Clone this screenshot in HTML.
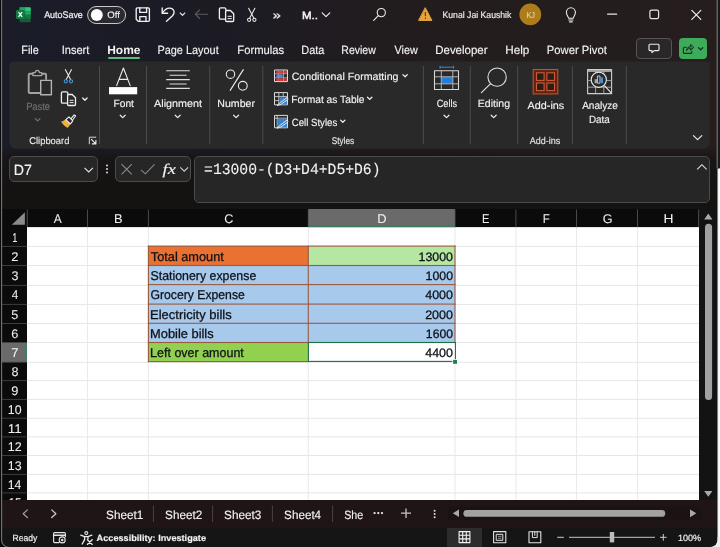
<!DOCTYPE html>
<html lang="en">
<head>
<meta charset="utf-8">
<title>Excel - Left over amount</title>
<style>
html,body{margin:0;padding:0;background:#000;}
body{width:720px;height:547px;overflow:hidden;position:relative;font-family:"Liberation Sans",sans-serif;color:#f3f3f3;}
#win{position:absolute;left:0;top:0;width:720px;height:547px;overflow:hidden;background:#1c1718;}
.abs{position:absolute;}
svg{position:absolute;overflow:visible;}
.t{position:absolute;white-space:pre;line-height:1;text-rendering:geometricPrecision;transform-origin:0 0;color:#f3f3f3;}
#chrome{position:absolute;left:0;top:0;width:720px;height:209px;background:linear-gradient(90deg,#1a1c29 0%,#1c1b24 30%,#221c1e 55%,#261e1d 100%);}
#chrome2{position:absolute;left:0;top:146px;width:720px;height:63px;background:linear-gradient(180deg,rgba(22,19,19,0) 0%,#181516 22%,#151212 60%,#151212 100%);}
#titlebar,#tabs,#ribboncontent,#formulabar,#sheetbar,#status,#grid{position:absolute;left:0;top:0;width:720px;height:547px;will-change:transform;}
.fbox{position:absolute;background:#262626;border:1px solid #4b4b4b;border-radius:5px;box-sizing:border-box;}
</style>
</head>
<body>
<div id="win">
<div id="chrome"></div>
<div id="chrome2"></div>

<!-- ===== TITLE BAR ===== -->
<div id="titlebar">
<svg style="left:0;top:0" width="720" height="32" viewBox="0 0 720 32" fill="none" stroke-linecap="round" stroke-linejoin="round">
<!-- excel logo -->
<g stroke="none">
<path d="M20.5 7.2 H29.6 Q30.8 7.2 30.8 8.4 V21.1 Q30.8 22.3 29.6 22.3 H20.7 Q19.5 22.3 19.5 21.1 V8.2 Q19.5 7.2 20.5 7.2 Z" fill="#185c37"/>
<rect x="19.5" y="7.2" width="5.7" height="3.9" fill="#21a366"/>
<path d="M25.2 7.2 H29.6 Q30.8 7.2 30.8 8.4 V11.1 H25.2 Z" fill="#33c481"/>
<rect x="19.5" y="11.1" width="5.7" height="3.7" fill="#107c41"/>
<rect x="25.2" y="11.1" width="5.6" height="3.7" fill="#21a366"/>
<rect x="25.2" y="14.8" width="5.6" height="3.7" fill="#107c41"/>
<rect x="16" y="10" width="8.6" height="8.9" rx="1" fill="#107c41"/>
</g>
<path d="M18.5 12.1 L22.1 16.9 M22.1 12.1 L18.5 16.9" stroke="#fff" stroke-width="1.25" stroke-linecap="butt"/>
<!-- autosave toggle -->
<rect x="87.6" y="6.5" width="38" height="17" rx="8.5" stroke="#c6c6c6" stroke-width="1" fill="#2a2a30"/>
<circle cx="96.8" cy="15" r="6" fill="#fdfdfd" stroke="none"/>
<!-- save -->
<g stroke="#f2f2f2" stroke-width="1.35">
<path d="M136.2 9 Q136.2 7.9 137.3 7.9 H148.2 Q149.4 7.9 149.4 9 V20.3 Q149.4 21.4 148.2 21.4 H138.4 L136.2 19.3 Z"/>
<path d="M139.8 7.9 V12.4 H146.6 V7.9"/>
<path d="M139.8 21.4 V16.6 H146 V21.4"/>
</g>
<!-- undo -->
<g stroke="#f2f2f2" stroke-width="1.35">
<path d="M162.2 7.8 V13.2 H167.6"/>
<path d="M162.4 13 C164.5 9.8 167.4 8 170 8.2 C173 8.5 174.5 10.8 174 13 C173.7 14.4 173 15.2 172 16.2 L166.5 21.2"/>
</g>
<path d="M180.2 13 L182.5 15.4 L184.8 13" stroke="#e4e4e4" stroke-width="1.1"/>
<!-- back (disabled) -->
<path d="M207.5 14.2 H195.5 M199.6 10 L195.3 14.2 L199.6 18.5" stroke="#5d5b60" stroke-width="1.1"/>
<!-- copy -->
<g stroke="#f2f2f2" stroke-width="1.3">
<path d="M224.8 19.2 H220.6 Q219.4 19.2 219.4 18 V9 Q219.4 7.8 220.6 7.8 H224.6 Q225.8 7.8 225.8 9 V10"/>
<path d="M225.6 11.6 Q225.6 10.5 226.7 10.5 H230.4 L233.7 13.8 V20.4 Q233.7 21.5 232.6 21.5 H226.7 Q225.6 21.5 225.6 20.4 Z"/>
<path d="M228 16.3 H231.4 M228 18.6 H231.4" stroke-width="1"/>
</g>
<!-- scissors -->
<g stroke="#ececec" stroke-width="1.05">
<path d="M248.6 8.2 L253.9 18.2 M254.9 8.2 L249.6 18.2"/>
<circle cx="249.1" cy="19.8" r="1.6"/>
<circle cx="254.4" cy="19.8" r="1.6"/>
</g>
<!-- dropdown chevron after M.. -->
<path d="M322.2 12.9 L326 16.6 L329.8 12.9" stroke="#ececec" stroke-width="1.2"/>
<!-- search -->
<circle cx="381.3" cy="12.6" r="4.1" stroke="#e8e8e8" stroke-width="1.1"/>
<path d="M378.3 15.7 L373.7 20.4" stroke="#e8e8e8" stroke-width="1.2"/>
<!-- warning -->
<path d="M425.4 8 L431.9 20.4 H418.9 Z" fill="#e7a53c" stroke="#e7a53c" stroke-width="1"/>
<path d="M425.4 12 V16.3" stroke="#5a3c10" stroke-width="1.2" stroke-linecap="butt"/>
<circle cx="425.4" cy="18.3" r="0.7" fill="#5a3c10" stroke="none"/>
<!-- avatar -->
<circle cx="530.3" cy="14.4" r="10.9" fill="#ad7d1d" stroke="none"/>
<!-- light bulb -->
<g stroke="#ececec" stroke-width="1.1">
<path d="M568.6 18.2 C568.3 16.4 566.4 15.3 566.4 12.6 C566.4 9.8 568.4 7.8 570.9 7.8 C573.4 7.8 575.4 9.8 575.4 12.6 C575.4 15.3 573.5 16.4 573.2 18.2 Z"/>
<path d="M568.8 20 H573 M569.6 21.9 H572.2"/>
</g>
<!-- window controls -->
<path d="M607.6 14.2 H616.6" stroke="#e6e6e6" stroke-width="1.2"/>
<rect x="649.9" y="10.1" width="8.7" height="8.6" rx="1.6" stroke="#e6e6e6" stroke-width="1.2"/>
<path d="M691.8 10.3 L700.8 19.3 M700.8 10.3 L691.8 19.3" stroke="#f0f0f0" stroke-width="1.2"/>
</svg>
<div class="t" style="left:0;top:11px;font-size:9.5px;color:#f4f4f4;transform:translateX(44.13px) scaleX(0.9392);-webkit-text-stroke:0.2px;">AutoSave</div>
<div class="t" style="left:0;top:11px;font-size:9.36px;color:#f0f0f0;transform:translateX(107.24px) scaleX(1.0214);-webkit-text-stroke:0.14px;">Off</div>
<div class="t" style="left:0;top:12px;font-size:10.47px;color:#f4f4f4;transform:translateX(301.94px) scaleX(1.1090);-webkit-text-stroke:0.45px;">M..</div>
<div class="t" style="left:0;top:10px;font-size:11.73px;color:#f0f0f0;transform:translateX(272.81px) scaleX(1.2390);-webkit-text-stroke:0.3px;">»</div>
<div class="t" style="left:0;top:11px;font-size:9.36px;color:#f0f0f0;transform:translateX(442.49px) scaleX(0.9274);-webkit-text-stroke:0.14px;">Kunal Jai Kaushik</div>
<div class="t" style="left:0;top:11px;font-size:8.38px;color:#f3e3bd;transform:translateX(526.40px) scaleX(0.8769);">KJ</div>
</div>

<!-- ===== TABS ===== -->
<div id="tabs">
<div class="abs" style="left:108px;top:57px;width:32px;height:2px;background:#61b981;border-radius:1px;"></div>
<div class="abs" style="left:636px;top:38px;width:36px;height:21px;border:1px solid #565555;border-radius:4px;box-sizing:border-box;background:#292727;"></div>
<div class="abs" style="left:679px;top:38px;width:28px;height:21px;border-radius:4px;background:#3eab5b;"></div>
<svg style="left:0;top:32px" width="720" height="30" viewBox="0 32 720 30" fill="none" stroke-linecap="round" stroke-linejoin="round">
<path d="M650 44.2 H658 Q659 44.2 659 45.2 V49.6 Q659 50.6 658 50.6 H654.3 L652 52.6 V50.6 H650 Q649 50.6 649 49.6 V45.2 Q649 44.2 650 44.2 Z" stroke="#ececec" stroke-width="1.15"/>
<path d="M686.4 47.2 H684.4 Q683.4 47.2 683.4 48.2 V52.4 Q683.4 53.4 684.4 53.4 H690.8 Q691.8 53.4 691.8 52.4 V51.4" stroke="#16331f" stroke-width="1.15"/>
<path d="M686.6 50.4 C686.8 47.8 688.4 46.6 690.6 46.6 V44.4 L693.8 47.4 L690.6 50.2 V48.4 C689 48.4 687.6 48.8 686.6 50.4 Z" stroke="#16331f" stroke-width="1" fill="#2f8a49"/>
<path d="M698.4 47.6 L700.6 49.8 L702.8 47.6" stroke="#16331f" stroke-width="1.3"/>
</svg>
<div class="t" style="left:0;top:45px;font-size:11.87px;transform:translateX(21.28px) scaleX(0.9164);-webkit-text-stroke:0.14px;">File</div>
<div class="t" style="left:0;top:45px;font-size:11.87px;transform:translateX(61.67px) scaleX(0.9338);-webkit-text-stroke:0.14px;">Insert</div>
<div class="t" style="left:0;top:45px;font-size:11.87px;font-weight:bold;transform:translateX(107.20px) scaleX(1.0078);">Home</div>
<div class="t" style="left:0;top:45px;font-size:11.87px;transform:translateX(157.48px) scaleX(0.9191);-webkit-text-stroke:0.14px;">Page Layout</div>
<div class="t" style="left:0;top:45px;font-size:11.87px;transform:translateX(237.25px) scaleX(0.9502);-webkit-text-stroke:0.14px;">Formulas</div>
<div class="t" style="left:0;top:45px;font-size:11.87px;transform:translateX(301.28px) scaleX(0.9208);-webkit-text-stroke:0.14px;">Data</div>
<div class="t" style="left:0;top:45px;font-size:11.87px;transform:translateX(341.31px) scaleX(0.8872);-webkit-text-stroke:0.14px;">Review</div>
<div class="t" style="left:0;top:45px;font-size:11.87px;transform:translateX(394.58px) scaleX(0.9109);-webkit-text-stroke:0.14px;">View</div>
<div class="t" style="left:0;top:45px;font-size:11.87px;transform:translateX(435.23px) scaleX(0.9664);-webkit-text-stroke:0.14px;">Developer</div>
<div class="t" style="left:0;top:45px;font-size:11.87px;transform:translateX(505.21px) scaleX(0.9868);-webkit-text-stroke:0.14px;">Help</div>
<div class="t" style="left:0;top:45px;font-size:11.87px;transform:translateX(546.75px) scaleX(0.9501);-webkit-text-stroke:0.14px;">Power Pivot</div>
</div>

<!-- ===== RIBBON ===== -->
<div id="ribboncontent">
<svg style="left:0;top:60px" width="720" height="90" viewBox="0 60 720 90" fill="none" stroke-linecap="round" stroke-linejoin="round">
<path d="M14.2 61.5 H706.6 Q709.7 61.5 709.7 64.6 V140.8 Q709.7 148.7 701.8 148.7 H17.1 Q9.2 148.7 9.2 140.8 V66.5 Q9.2 61.5 14.2 61.5 Z" fill="#292929" stroke="none"/>
<!-- group separators -->
<path d="M99.5 66 V144 M146.5 66 V144 M209.7 66 V144 M262.8 66 V144 M423.4 66 V144 M470.3 66 V144 M517.7 66 V144 M572.4 66 V144 M626.3 66 V144" stroke="#4c4c4c" stroke-width="1" stroke-linecap="butt"/>
<!-- paste (disabled) -->
<g stroke="#a3a3a3">
<path d="M39.4 93 H29.8 Q28.7 93 28.7 91.9 V74.9 Q28.7 73.8 29.8 73.8 H32.6 M42 73.8 H45 Q46.1 73.8 46.1 74.9 V79" stroke-width="1.9"/>
<path d="M32.9 75.6 V72.6 H35.3 C35.3 69.7 39.3 69.7 39.3 72.6 H41.7 V75.6 Z" stroke-width="1.3"/>
<rect x="40.7" y="80.4" width="10.7" height="14.4" stroke-width="1.4" stroke="#b4b4b4"/>
</g>
<path d="M35.2 118.6 L37.6 120.9 L40 118.6" stroke="#777" stroke-width="1.1"/>
<!-- cut -->
<g stroke-width="1.05">
<path d="M65.3 69.6 L70.6 79.6 M71.5 69.6 L66.2 79.6" stroke="#ececec"/>
<circle cx="65.8" cy="81.3" r="1.6" stroke="#3f9be0"/>
<circle cx="71" cy="81.3" r="1.6" stroke="#3f9be0"/>
</g>
<!-- copy -->
<g stroke="#eeeeee" stroke-width="1.3">
<path d="M66.8 103.2 H62.6 Q61.4 103.2 61.4 102 V93 Q61.4 91.8 62.6 91.8 H66.6 Q67.8 91.8 67.8 93 V94"/>
<path d="M67.6 95.6 Q67.6 94.5 68.7 94.5 H72.2 L75.5 97.8 V104.4 Q75.5 105.5 74.4 105.5 H68.7 Q67.6 105.5 67.6 104.4 Z"/>
<path d="M70 100.3 H73.2 M70 102.6 H73.2" stroke-width="1"/>
</g>
<path d="M82.7 98 L84.9 100.2 L87.1 98" stroke="#f0f0f0" stroke-width="1.3"/>
<!-- format painter -->
<path d="M62 122 L66.6 119.2 L70.6 123.6 L67.6 127.4 C65.4 126.6 63.4 124.8 62 122 Z" fill="#f0b040" stroke="#f0b040" stroke-width="0.8"/>
<path d="M65.8 119.6 L69 116.8 L72.8 120.8 L70.4 123.8 Z" stroke="#f4f4f4" stroke-width="1.05" fill="#292929"/>
<path d="M71 118.6 L74.2 114.8 L75.6 116 L72.6 120" stroke="#f4f4f4" stroke-width="1.05"/>
<!-- dialog launcher -->
<path d="M95.8 137.2 H89.3 V143.8" stroke="#d8d8d8" stroke-width="1"/>
<path d="M91.4 139.3 L95.6 143.6 M95.9 140.4 V143.9 H92.4" stroke="#f0f0f0" stroke-width="1.1"/>
<!-- font -->
<path d="M116.6 85.6 L123.4 68 L130.2 85.6 M119.3 79.4 H127.5" stroke="#ececec" stroke-width="1.1"/>
<rect x="109" y="87.1" width="28.2" height="7.2" fill="#fdfdfd"/>
<path d="M120.2 115.2 L122.7 117.6 L125.2 115.2" stroke="#ececec" stroke-width="1.2"/>
<!-- alignment -->
<path d="M166.2 70.8 H189.8 M169.6 75.2 H186.6 M166.2 79.6 H189.8 M169.6 84 H186.6 M166.2 88.4 H189.8" stroke="#dedede" stroke-width="1.1" stroke-linecap="butt"/>
<path d="M175.2 115.2 L177.7 117.6 L180.2 115.2" stroke="#ececec" stroke-width="1.2"/>
<!-- number -->
<g stroke="#ececec" stroke-width="1.1">
<circle cx="230.5" cy="74.2" r="4.2"/>
<circle cx="242.8" cy="85.8" r="4.4"/>
<path d="M243.3 69.6 L230.2 90.4"/>
</g>
<path d="M233.6 115.2 L236.1 117.6 L238.6 115.2" stroke="#ececec" stroke-width="1.2"/>
<!-- conditional formatting icon -->
<g stroke-linecap="butt">
<rect x="274.5" y="70" width="13" height="11.6" stroke="#e2e2e2" stroke-width="1"/>
<path d="M278.6 70 V81.6 M283.6 70 V81.6 M274.5 73.7 H287.5 M274.5 77.8 H287.5" stroke="#bdbdbd" stroke-width="0.8"/>
<rect x="276.2" y="70.8" width="6.6" height="2.5" fill="#e23838"/>
<rect x="284.2" y="70.8" width="2.6" height="2.5" fill="#e23838"/>
<rect x="276.2" y="78.4" width="6.6" height="2.6" fill="#e23838"/>
<rect x="284.2" y="78.4" width="2.6" height="2.6" fill="#e23838"/>
<rect x="276.4" y="74.4" width="6.2" height="3" fill="#4f8fd6"/>
</g>
<!-- format as table icon -->
<g stroke-linecap="butt">
<rect x="274.5" y="92.6" width="13" height="12.2" stroke="#dcdcdc" stroke-width="1"/>
<path d="M278.8 92.6 V104.8 M283.2 92.6 V97 M274.5 96.6 H287.5 M274.5 100.6 H279" stroke="#c8c8c8" stroke-width="0.9"/>
<path d="M279.4 97.2 H287 V104.4 H279.4 Z" fill="#2f86d6"/>
<path d="M287.2 97.4 L280.2 102.6 L277 105.6 L281.2 104.2 L288 99.4 Z" fill="#5d7f9e" stroke="#f0f0f0" stroke-width="0.9" stroke-linejoin="round"/>
</g>
<!-- cell styles icon -->
<g stroke-linecap="butt">
<rect x="274.5" y="115.4" width="13" height="12.4" stroke="#dcdcdc" stroke-width="1"/>
<path d="M274.5 118.2 H287.5 M277.2 115.4 V127.8" stroke="#c8c8c8" stroke-width="0.9"/>
<path d="M277.8 118.8 H287 V127.2 H277.8 Z" fill="#2f86d6"/>
<path d="M287.2 120 L280.2 125.2 L277 128.2 L281.2 126.8 L288 122 Z" fill="#5d7f9e" stroke="#f0f0f0" stroke-width="0.9" stroke-linejoin="round"/>
</g>
<path d="M402.9 74.6 L405.1 76.8 L407.3 74.6 M367.5 97.2 L369.7 99.4 L371.9 97.2 M340.6 120.1 L342.8 122.3 L345 120.1" stroke="#f0f0f0" stroke-width="1.3"/>
<!-- cells -->
<g stroke-linecap="butt">
<path d="M440 67.2 H453.6 M440 65.8 V68.6 M453.6 65.8 V68.6" stroke="#3f97e0" stroke-width="0.9"/>
<rect x="441.6" y="77" width="11" height="6.6" fill="#1f7fdb"/>
<rect x="434.5" y="70.7" width="24" height="18.8" stroke="#d6d6d6" stroke-width="1.1"/>
<path d="M441.3 70.7 V89.5 M452.8 70.7 V89.5 M434.5 76.8 H458.5 M434.5 83.8 H458.5" stroke="#b4b4b4" stroke-width="1"/>
</g>
<path d="M444 115.2 L446.5 117.6 L449 115.2" stroke="#ececec" stroke-width="1.2"/>
<!-- editing -->
<circle cx="497.1" cy="77.1" r="9.2" stroke="#e4e4e4" stroke-width="1.05"/>
<path d="M490.4 83.9 L481.4 92.6" stroke="#e4e4e4" stroke-width="1.15"/>
<path d="M491.2 115.2 L493.7 117.6 L496.2 115.2" stroke="#ececec" stroke-width="1.2"/>
<!-- add-ins -->
<g stroke-linecap="butt" stroke-linejoin="miter">
<rect x="533.2" y="69.5" width="24.6" height="24.4" fill="#5e2312" stroke="#c4522c" stroke-width="1.1"/>
<rect x="536.5" y="72.8" width="7.6" height="7.6" fill="#2c1d19" stroke="#cc5d36" stroke-width="1.1"/>
<rect x="546.9" y="72.8" width="7.6" height="7.6" fill="#2c1d19" stroke="#cc5d36" stroke-width="1.1"/>
<rect x="536.5" y="83" width="7.6" height="7.6" fill="#2c1d19" stroke="#cc5d36" stroke-width="1.1"/>
<rect x="546.9" y="83" width="7.6" height="7.6" fill="#2c1d19" stroke="#cc5d36" stroke-width="1.1"/>
</g>
<!-- analyze data -->
<g stroke-linecap="butt">
<rect x="587.6" y="69.6" width="24" height="24" stroke="#cfcfcf" stroke-width="1.1"/>
<path d="M587.6 71 H611.6" stroke="#bdbdbd" stroke-width="1.6"/>
<path d="M587.6 80.6 H611.6 M587.6 87.2 H611.6 M595.6 71 V93.6 M603.8 71 V93.6" stroke="#ababab" stroke-width="0.9"/>
<circle cx="598.8" cy="79.8" r="7.6" fill="#292929" stroke="#ececec" stroke-width="1.1"/>
<rect x="594.6" y="79.2" width="2.4" height="4" fill="#9aa6b4"/>
<rect x="597.4" y="76" width="2.6" height="7.2" fill="#2a2f36" stroke="#e8e8e8" stroke-width="0.8"/>
<rect x="600.6" y="77.4" width="2.4" height="5.8" fill="#3a93dd"/>
<path d="M604.4 85.6 L611.4 93.2" stroke="#ececec" stroke-width="1.1"/>
</g>
<!-- collapse ribbon -->
<path d="M693.4 135.6 L697.6 139.6 L701.8 135.6" stroke="#ececec" stroke-width="1.2"/>
</svg>
<div class="t" style="left:0;top:103px;font-size:10.47px;color:#747474;transform:translateX(26.13px) scaleX(0.8902);-webkit-text-stroke:0.1px;">Paste</div>
<div class="t" style="left:0;top:137px;font-size:9.78px;color:#e8e8e8;transform:translateX(29.22px) scaleX(0.9614);-webkit-text-stroke:0.14px;">Clipboard</div>
<div class="t" style="left:0;top:100px;font-size:10.47px;transform:translateX(113.46px) scaleX(0.9786);-webkit-text-stroke:0.14px;">Font</div>
<div class="t" style="left:0;top:100px;font-size:10.47px;transform:translateX(154.12px) scaleX(1.0307);-webkit-text-stroke:0.14px;">Alignment</div>
<div class="t" style="left:0;top:100px;font-size:10.47px;transform:translateX(217.33px) scaleX(1.0110);-webkit-text-stroke:0.14px;">Number</div>
<div class="t" style="left:0;top:73px;font-size:10.47px;transform:translateX(291.65px) scaleX(1.0145);-webkit-text-stroke:0.14px;">Conditional Formatting</div>
<div class="t" style="left:0;top:96px;font-size:10.47px;transform:translateX(291.36px) scaleX(0.9778);-webkit-text-stroke:0.14px;">Format as Table</div>
<div class="t" style="left:0;top:119px;font-size:10.47px;transform:translateX(291.70px) scaleX(0.9204);-webkit-text-stroke:0.14px;">Cell Styles</div>
<div class="t" style="left:0;top:137px;font-size:9.78px;color:#e8e8e8;transform:translateX(331.73px) scaleX(0.8424);-webkit-text-stroke:0.14px;">Styles</div>
<div class="t" style="left:0;top:100px;font-size:10.47px;transform:translateX(436.72px) scaleX(0.8766);-webkit-text-stroke:0.14px;">Cells</div>
<div class="t" style="left:0;top:100px;font-size:10.47px;transform:translateX(477.83px) scaleX(1.0044);-webkit-text-stroke:0.14px;">Editing</div>
<div class="t" style="left:0;top:102px;font-size:10.47px;transform:translateX(527.62px) scaleX(1.0309);-webkit-text-stroke:0.14px;">Add-ins</div>
<div class="t" style="left:0;top:137px;font-size:9.78px;color:#e8e8e8;transform:translateX(529.63px) scaleX(0.9212);-webkit-text-stroke:0.14px;">Add-ins</div>
<div class="t" style="left:0;top:102px;font-size:10.47px;transform:translateX(582.13px) scaleX(0.9571);-webkit-text-stroke:0.14px;">Analyze</div>
<div class="t" style="left:0;top:116px;font-size:10.47px;transform:translateX(588.89px) scaleX(0.9451);-webkit-text-stroke:0.14px;">Data</div>
</div>

<!-- ===== FORMULA BAR ===== -->
<div id="formulabar">
<div class="fbox" style="left:9px;top:156px;width:89px;height:26px;"></div>
<svg style="left:83px;top:166px" width="12" height="8" viewBox="0 0 12 8"><path d="M1.5 1.8 L5.7 5.9 L9.9 1.8" stroke="#e6e6e6" stroke-width="1.1" fill="none"/></svg>
<svg style="left:104px;top:163px" width="6" height="12" viewBox="0 0 6 12"><circle cx="3" cy="2.4" r="1" fill="#dcdcdc"/><circle cx="3" cy="6" r="1" fill="#dcdcdc"/><circle cx="3" cy="9.6" r="1" fill="#dcdcdc"/></svg>
<div class="fbox" style="left:115px;top:156px;width:76px;height:26px;"></div>
<svg style="left:120px;top:163px" width="70" height="13" viewBox="0 0 70 13"><path d="M1.5 1.2 L11.8 11.3 M11.8 1.2 L1.5 11.3" stroke="#8a8a8a" stroke-width="1.1" fill="none"/><path d="M21 6.8 L25.3 10.8 L34.5 1.4" stroke="#8a8a8a" stroke-width="1.1" fill="none"/><path d="M60.3 4.3 L64.2 8.2 L68.1 4.3" stroke="#cfcfcf" stroke-width="1.1" fill="none"/></svg>
<div class="fbox" style="left:194px;top:156px;width:516px;height:47px;"></div>
<svg style="left:696px;top:163px" width="12" height="8" viewBox="0 0 12 8"><path d="M1.2 6.3 L5.9 1.7 L10.6 6.3" stroke="#e0e0e0" stroke-width="1.1" fill="none"/></svg>
<div class="t" style="left:0;top:164px;font-size:14.8px;transform:translateX(13.80px) scaleX(0.9576);-webkit-text-stroke:0.14px;">D7</div>
<div class="t" style="left:0;top:163px;font-size:15.45px;font-family:'Liberation Mono',monospace;transform:translateX(204.06px) scaleX(0.9522);-webkit-text-stroke:0.1px;">=13000-(D3+D4+D5+D6)</div>
<div class="t" style="left:0;top:163px;font-size:14.85px;font-style:italic;font-family:'Liberation Serif',serif;transform:translateX(162.55px) scaleX(1.2340);-webkit-text-stroke:0.15px;">fx</div>
</div>

<!-- ===== GRID ===== -->
<div id="grid">
<svg style="left:0;top:0" width="720" height="547" viewBox="0 0 720 547" shape-rendering="auto">
<rect x="2.00" y="209.00" width="697.00" height="291.00" fill="#ffffff"/>
<rect x="86.95" y="227.10" width="1.10" height="272.90" fill="#ebebeb"/>
<rect x="147.85" y="227.10" width="1.10" height="272.90" fill="#ebebeb"/>
<rect x="307.75" y="227.10" width="1.10" height="272.90" fill="#ebebeb"/>
<rect x="454.45" y="227.10" width="1.10" height="272.90" fill="#ebebeb"/>
<rect x="515.35" y="227.10" width="1.10" height="272.90" fill="#ebebeb"/>
<rect x="575.95" y="227.10" width="1.10" height="272.90" fill="#ebebeb"/>
<rect x="636.95" y="227.10" width="1.10" height="272.90" fill="#ebebeb"/>
<rect x="27.00" y="245.90" width="672.00" height="1.00" fill="#e6e6e6"/>
<rect x="27.00" y="265.00" width="672.00" height="1.00" fill="#e6e6e6"/>
<rect x="27.00" y="284.90" width="672.00" height="1.00" fill="#e6e6e6"/>
<rect x="27.00" y="303.90" width="672.00" height="1.00" fill="#e6e6e6"/>
<rect x="27.00" y="323.00" width="672.00" height="1.00" fill="#e6e6e6"/>
<rect x="27.00" y="342.00" width="672.00" height="1.00" fill="#e6e6e6"/>
<rect x="27.00" y="361.80" width="672.00" height="1.00" fill="#e6e6e6"/>
<rect x="27.00" y="380.10" width="672.00" height="1.00" fill="#e6e6e6"/>
<rect x="27.00" y="398.90" width="672.00" height="1.00" fill="#e6e6e6"/>
<rect x="27.00" y="417.70" width="672.00" height="1.00" fill="#e6e6e6"/>
<rect x="27.00" y="436.40" width="672.00" height="1.00" fill="#e6e6e6"/>
<rect x="27.00" y="455.00" width="672.00" height="1.00" fill="#e6e6e6"/>
<rect x="27.00" y="473.90" width="672.00" height="1.00" fill="#e6e6e6"/>
<rect x="27.00" y="492.40" width="672.00" height="1.00" fill="#e6e6e6"/>
<rect x="2.00" y="209.00" width="697.00" height="18.10" fill="#0b0b0b"/>
<rect x="2.00" y="226.60" width="25.00" height="273.40" fill="#0b0b0b"/>
<rect x="699.00" y="209.00" width="18.50" height="291.00" fill="#141313"/>
<path d="M24.9 212.2 V224.8 H11.8 Z" fill="#8b8b8b"/>
<rect x="26.80" y="209.50" width="1.00" height="17.60" fill="#4a4a4a"/>
<rect x="87.00" y="209.50" width="1.00" height="17.60" fill="#4a4a4a"/>
<rect x="147.90" y="209.50" width="1.00" height="17.60" fill="#4a4a4a"/>
<rect x="307.80" y="209.50" width="1.00" height="17.60" fill="#4a4a4a"/>
<rect x="454.50" y="209.50" width="1.00" height="17.60" fill="#4a4a4a"/>
<rect x="515.40" y="209.50" width="1.00" height="17.60" fill="#4a4a4a"/>
<rect x="576.00" y="209.50" width="1.00" height="17.60" fill="#4a4a4a"/>
<rect x="637.00" y="209.50" width="1.00" height="17.60" fill="#4a4a4a"/>
<rect x="698.10" y="209.50" width="1.00" height="17.60" fill="#4a4a4a"/>
<rect x="308.40" y="209.00" width="146.50" height="18.10" fill="#6a6a6a"/>
<rect x="308.40" y="225.70" width="146.50" height="1.40" fill="#3d7a5d"/>
<rect x="2.00" y="245.90" width="25.00" height="1.00" fill="#3d3d3d"/>
<rect x="2.00" y="265.00" width="25.00" height="1.00" fill="#3d3d3d"/>
<rect x="2.00" y="284.90" width="25.00" height="1.00" fill="#3d3d3d"/>
<rect x="2.00" y="303.90" width="25.00" height="1.00" fill="#3d3d3d"/>
<rect x="2.00" y="323.00" width="25.00" height="1.00" fill="#3d3d3d"/>
<rect x="2.00" y="342.00" width="25.00" height="1.00" fill="#3d3d3d"/>
<rect x="2.00" y="361.80" width="25.00" height="1.00" fill="#3d3d3d"/>
<rect x="2.00" y="380.10" width="25.00" height="1.00" fill="#3d3d3d"/>
<rect x="2.00" y="398.90" width="25.00" height="1.00" fill="#3d3d3d"/>
<rect x="2.00" y="417.70" width="25.00" height="1.00" fill="#3d3d3d"/>
<rect x="2.00" y="436.40" width="25.00" height="1.00" fill="#3d3d3d"/>
<rect x="2.00" y="455.00" width="25.00" height="1.00" fill="#3d3d3d"/>
<rect x="2.00" y="473.90" width="25.00" height="1.00" fill="#3d3d3d"/>
<rect x="2.00" y="492.40" width="25.00" height="1.00" fill="#3d3d3d"/>
<rect x="2.00" y="342.90" width="25.00" height="19.00" fill="#6a6a6a"/>
<rect x="25.70" y="342.90" width="1.30" height="19.00" fill="#3a805c"/>
<rect x="148.40" y="246.10" width="159.90" height="19.40" fill="#e97132"/>
<rect x="308.30" y="246.10" width="146.70" height="19.40" fill="#b5e6a2"/>
<rect x="148.40" y="265.50" width="159.90" height="19.10" fill="#a6c9ec"/>
<rect x="308.30" y="265.50" width="146.70" height="19.10" fill="#a6c9ec"/>
<rect x="148.40" y="284.60" width="159.90" height="19.50" fill="#a6c9ec"/>
<rect x="308.30" y="284.60" width="146.70" height="19.50" fill="#a6c9ec"/>
<rect x="148.40" y="304.10" width="159.90" height="19.20" fill="#a6c9ec"/>
<rect x="308.30" y="304.10" width="146.70" height="19.20" fill="#a6c9ec"/>
<rect x="148.40" y="323.30" width="159.90" height="19.20" fill="#a6c9ec"/>
<rect x="308.30" y="323.30" width="146.70" height="19.20" fill="#a6c9ec"/>
<rect x="148.40" y="342.50" width="159.90" height="19.10" fill="#92d050"/>
<rect x="308.30" y="342.50" width="146.70" height="19.10" fill="#ffffff"/>
<rect x="147.85" y="245.55" width="307.70" height="1.10" fill="#9a5a3c"/>
<rect x="147.85" y="264.95" width="307.70" height="1.10" fill="#9a5a3c"/>
<rect x="147.85" y="284.05" width="307.70" height="1.10" fill="#9a5a3c"/>
<rect x="147.85" y="303.55" width="307.70" height="1.10" fill="#9a5a3c"/>
<rect x="147.85" y="322.75" width="307.70" height="1.10" fill="#9a5a3c"/>
<rect x="147.85" y="341.95" width="161.00" height="1.10" fill="#9a5a3c"/>
<rect x="147.85" y="361.05" width="161.00" height="1.10" fill="#9a5a3c"/>
<rect x="147.85" y="245.55" width="1.10" height="116.60" fill="#9a5a3c"/>
<rect x="307.75" y="245.55" width="1.10" height="97.50" fill="#9a5a3c"/>
<rect x="454.45" y="245.55" width="1.10" height="97.50" fill="#9a5a3c"/>
<rect x="308.40" y="342.50" width="147.00" height="18.90" fill="none" stroke="#1f6f45" stroke-width="1.1"/>
<rect x="452.40" y="359.20" width="5.00" height="5.00" fill="#ffffff"/>
<rect x="453.10" y="359.90" width="3.90" height="3.90" fill="#267a4d"/>
<path d="M704.2 219.4 H712.4 L708.3 213.6 Z" fill="#a9a9a9"/>
<rect x="705" y="223.8" width="7.1" height="176.2" rx="3.5" fill="#a0a0a0"/>
<path d="M704.2 491 H712.4 L708.3 496.8 Z" fill="#a9a9a9"/>
</svg>
<div class="t" style="left:0;top:213px;font-size:12.57px;color:#efefef;transform:translateX(53.82px) scaleX(0.9483);-webkit-text-stroke:0.05px;">A</div>
<div class="t" style="left:0;top:213px;font-size:12.57px;color:#efefef;transform:translateX(113.89px) scaleX(1.0200);-webkit-text-stroke:0.05px;">B</div>
<div class="t" style="left:0;top:213px;font-size:12.57px;color:#efefef;transform:translateX(224.15px) scaleX(1.0056);-webkit-text-stroke:0.05px;">C</div>
<div class="t" style="left:0;top:213px;font-size:12.57px;color:#efefef;transform:translateX(377.19px) scaleX(1.0240);-webkit-text-stroke:0.05px;">D</div>
<div class="t" style="left:0;top:213px;font-size:12.57px;color:#efefef;transform:translateX(481.94px) scaleX(0.8820);-webkit-text-stroke:0.05px;">E</div>
<div class="t" style="left:0;top:213px;font-size:12.57px;color:#efefef;transform:translateX(542.85px) scaleX(0.9133);-webkit-text-stroke:0.05px;">F</div>
<div class="t" style="left:0;top:213px;font-size:12.57px;color:#efefef;transform:translateX(602.66px) scaleX(1.0005);-webkit-text-stroke:0.05px;">G</div>
<div class="t" style="left:0;top:213px;font-size:12.57px;color:#efefef;transform:translateX(663.46px) scaleX(1.0977);-webkit-text-stroke:0.05px;">H</div>
<div class="t" style="left:0;top:232px;font-size:12.57px;color:#efefef;transform:translateX(12.19px) scaleX(0.7386);-webkit-text-stroke:0.05px;">1</div>
<div class="t" style="left:0;top:251px;font-size:12.57px;color:#efefef;transform:translateX(11.30px) scaleX(1.0315);-webkit-text-stroke:0.05px;">2</div>
<div class="t" style="left:0;top:270px;font-size:12.57px;color:#efefef;transform:translateX(11.43px) scaleX(1.0000);-webkit-text-stroke:0.05px;">3</div>
<div class="t" style="left:0;top:289px;font-size:12.57px;color:#efefef;transform:translateX(11.68px) scaleX(0.9329);-webkit-text-stroke:0.05px;">4</div>
<div class="t" style="left:0;top:309px;font-size:12.57px;color:#efefef;transform:translateX(11.36px) scaleX(1.0062);-webkit-text-stroke:0.05px;">5</div>
<div class="t" style="left:0;top:328px;font-size:12.57px;color:#efefef;transform:translateX(11.29px) scaleX(1.0205);-webkit-text-stroke:0.05px;">6</div>
<div class="t" style="left:0;top:347px;font-size:12.57px;color:#efefef;transform:translateX(11.28px) scaleX(1.0337);-webkit-text-stroke:0.05px;">7</div>
<div class="t" style="left:0;top:366px;font-size:12.57px;color:#efefef;transform:translateX(11.39px) scaleX(1.0053);-webkit-text-stroke:0.05px;">8</div>
<div class="t" style="left:0;top:385px;font-size:12.57px;color:#efefef;transform:translateX(11.34px) scaleX(1.0197);-webkit-text-stroke:0.05px;">9</div>
<div class="t" style="left:0;top:404px;font-size:12.57px;color:#efefef;transform:translateX(7.81px) scaleX(0.9817);-webkit-text-stroke:0.05px;">10</div>
<div class="t" style="left:0;top:423px;font-size:12.57px;color:#efefef;transform:translateX(7.72px) scaleX(1.0718);-webkit-text-stroke:0.05px;">11</div>
<div class="t" style="left:0;top:441px;font-size:12.57px;color:#efefef;transform:translateX(7.80px) scaleX(0.9922);-webkit-text-stroke:0.05px;">12</div>
<div class="t" style="left:0;top:460px;font-size:12.57px;color:#efefef;transform:translateX(7.81px) scaleX(0.9869);-webkit-text-stroke:0.05px;">13</div>
<div class="t" style="left:0;top:479px;font-size:12.57px;color:#efefef;transform:translateX(7.82px) scaleX(0.9714);-webkit-text-stroke:0.05px;">14</div>
<div class="t" style="left:0;top:497px;font-size:12.57px;color:#f0f0f0;transform:translateX(8.58px) scaleX(0.9124);-webkit-text-stroke:0.14px;clip-path:inset(0 0 70% 0);">15</div>
<div class="t" style="left:0;top:251px;font-size:12.85px;color:#0e1118;transform:translateX(150.81px) scaleX(0.9921);-webkit-text-stroke:0.28px;">Total amount</div>
<div class="t" style="left:0;top:251px;font-size:12.29px;color:#0e1118;transform:translateX(418.61px) scaleX(1.0070);-webkit-text-stroke:0.28px;">13000</div>
<div class="t" style="left:0;top:270px;font-size:12.85px;color:#0e1118;transform:translateX(150.45px) scaleX(0.9622);-webkit-text-stroke:0.28px;">Stationery expense</div>
<div class="t" style="left:0;top:270px;font-size:12.29px;color:#0e1118;transform:translateX(425.61px) scaleX(1.0016);-webkit-text-stroke:0.28px;">1000</div>
<div class="t" style="left:0;top:289px;font-size:12.85px;color:#0e1118;transform:translateX(150.48px) scaleX(0.9503);-webkit-text-stroke:0.28px;">Grocery Expense</div>
<div class="t" style="left:0;top:289px;font-size:12.29px;color:#0e1118;transform:translateX(425.26px) scaleX(1.0147);-webkit-text-stroke:0.28px;">4000</div>
<div class="t" style="left:0;top:309px;font-size:12.85px;color:#0e1118;transform:translateX(150.03px) scaleX(1.0122);-webkit-text-stroke:0.28px;">Electricity bills</div>
<div class="t" style="left:0;top:309px;font-size:12.29px;color:#0e1118;transform:translateX(425.17px) scaleX(1.0180);-webkit-text-stroke:0.28px;">2000</div>
<div class="t" style="left:0;top:328px;font-size:12.85px;color:#0e1118;transform:translateX(150.04px) scaleX(1.0013);-webkit-text-stroke:0.28px;">Mobile bills</div>
<div class="t" style="left:0;top:328px;font-size:12.29px;color:#0e1118;transform:translateX(425.87px) scaleX(0.9919);-webkit-text-stroke:0.28px;">1600</div>
<div class="t" style="left:0;top:347px;font-size:12.85px;color:#0e1118;transform:translateX(150.07px) scaleX(0.9728);-webkit-text-stroke:0.28px;">Left over amount</div>
<div class="t" style="left:0;top:347px;font-size:12.29px;color:#0e1118;transform:translateX(425.26px) scaleX(1.0147);-webkit-text-stroke:0.28px;">4400</div>
</div>

<!-- ===== SHEET BAR ===== -->
<div id="sheetbar">
<div class="abs" style="left:2px;top:500px;width:716px;height:28px;background:#1f1516;"></div>
<svg style="left:0;top:500px" width="720" height="28" viewBox="0 0 720 28" fill="none" stroke-linecap="round" stroke-linejoin="round">
<rect x="448" y="6.4" width="252.5" height="14.2" rx="3.5" fill="#1a1213"/>
<path d="M27.4 9.9 L23.2 13.7 L27.4 17.5" stroke="#a39d9d" stroke-width="1.25"/>
<path d="M51.7 9.9 L55.9 13.7 L51.7 17.5" stroke="#d0cccc" stroke-width="1.25"/>
<path d="M153.4 5.6 V22 M212.6 5.6 V22 M272.4 5.6 V22 M332.6 5.6 V22" stroke="#4d4142" stroke-width="1" stroke-linecap="butt"/>
<circle cx="374.6" cy="13.1" r="1.15" fill="#e8e8e8"/><circle cx="378.3" cy="13.1" r="1.15" fill="#e8e8e8"/><circle cx="382" cy="13.1" r="1.15" fill="#e8e8e8"/>
<path d="M401 13.2 H411 M406 8.4 V18" stroke="#c4c4c4" stroke-width="1.3" stroke-linecap="butt"/>
<circle cx="434.6" cy="10.7" r="1" fill="#dcdcdc"/><circle cx="434.6" cy="14" r="1" fill="#dcdcdc"/><circle cx="434.6" cy="17.3" r="1" fill="#dcdcdc"/>
<path d="M459 9.4 V17 L452.8 13.2 Z" fill="#a8a8a8"/>
<rect x="463.4" y="10" width="201.8" height="6.8" rx="3.4" fill="#a2a2a2"/>
<path d="M690 9.4 V17.2 L696.4 13.3 Z" fill="#a8a8a8"/>
</svg>
<div class="t" style="left:0;top:509px;font-size:12.15px;transform:translateX(106.11px) scaleX(0.9678);-webkit-text-stroke:0.14px;">Sheet1</div>
<div class="t" style="left:0;top:509px;font-size:12.15px;transform:translateX(165.11px) scaleX(0.9683);-webkit-text-stroke:0.14px;">Sheet2</div>
<div class="t" style="left:0;top:509px;font-size:12.15px;transform:translateX(224.11px) scaleX(0.9667);-webkit-text-stroke:0.14px;">Sheet3</div>
<div class="t" style="left:0;top:509px;font-size:12.15px;transform:translateX(284.11px) scaleX(0.9616);-webkit-text-stroke:0.14px;">Sheet4</div>
<div class="t" style="left:0;top:509px;font-size:12.15px;transform:translateX(344.16px) scaleX(0.8839);-webkit-text-stroke:0.14px;">She</div>
</div>

<!-- ===== STATUS BAR ===== -->
<div id="status">
<div class="abs" style="left:2px;top:528px;width:716px;height:19px;background:#151515;"></div>
<div class="abs" style="left:447px;top:528px;width:35px;height:19px;background:#2c2c2c;"></div>
<svg style="left:0;top:528px" width="720" height="19" viewBox="0 0 720 19" fill="none" stroke-linecap="round" stroke-linejoin="round">
<!-- macro record icon -->
<path d="M59 14.6 H54.6 Q53.6 14.6 53.6 13.6 V5.6 Q53.6 4.6 54.6 4.6 H64.4 Q65.4 4.6 65.4 5.6 V8.6" stroke="#e4e4e4" stroke-width="1.15"/>
<path d="M53.6 7.2 H65.4" stroke="#e4e4e4" stroke-width="1.5"/>
<circle cx="62.2" cy="11.9" r="3" stroke="#e4e4e4" stroke-width="1.1"/>
<circle cx="62.2" cy="11.9" r="1.25" fill="#e4e4e4"/>
<!-- accessibility icon -->
<circle cx="86.3" cy="5.1" r="1.5" stroke="#e6e6e6" stroke-width="1.05"/>
<path d="M80.8 7.2 L84.6 8.6 H88 L91.8 7.2 M84.6 8.6 V11.6 L82.2 16 M88 8.6 V10.8" stroke="#ececec" stroke-width="1.35"/>
<path d="M87.4 11.8 L92.2 16.4 M92.2 11.8 L87.4 16.4" stroke="#ececec" stroke-width="1.35"/>
<!-- view buttons -->
<path d="M459.1 3.6 H469.9 V14.6 H459.1 Z M462.7 3.6 V14.6 M466.3 3.6 V14.6 M459.1 7.3 H469.9 M459.1 10.9 H469.9" stroke="#f2f2f2" stroke-width="1.1" stroke-linecap="butt"/>
<rect x="493.6" y="3.6" width="12.2" height="11.2" stroke="#e4e4e4" stroke-width="1.1"/>
<rect x="496.6" y="6.3" width="6.2" height="6" stroke="#e4e4e4" stroke-width="1"/>
<path d="M498.4 8.3 H501 M498.4 10.3 H501" stroke="#bdbdbd" stroke-width="0.8"/>
<rect x="529" y="3.8" width="11.8" height="11" stroke="#e4e4e4" stroke-width="1.1"/>
<path d="M532.4 3.8 V9.6 H537.2 V3.8 M534.8 3.8 V7.4" stroke="#e4e4e4" stroke-width="1"/>
<!-- zoom slider -->
<path d="M557.2 9.3 H563.8" stroke="#cfcfcf" stroke-width="1" stroke-linecap="butt"/>
<path d="M569 9.3 H655" stroke="#c6c6c6" stroke-width="1" stroke-linecap="butt"/>
<rect x="609.8" y="4" width="4.4" height="10.4" fill="#bcbcbc"/>
<path d="M660 9.3 H666.6 M663.3 6 V12.7" stroke="#cfcfcf" stroke-width="1" stroke-linecap="butt"/>
</svg>
<div class="t" style="left:0;top:534px;font-size:9.08px;color:#ececec;transform:translateX(12.49px) scaleX(0.9416);-webkit-text-stroke:0.2px;">Ready</div>
<div class="t" style="left:0;top:534px;font-size:8.94px;color:#f4f4f4;font-weight:bold;transform:translateX(96.62px) scaleX(1.0257);-webkit-text-stroke:0.15px;">Accessibility: Investigate</div>
<div class="t" style="left:0;top:534px;font-size:9.08px;color:#ececec;transform:translateX(678.01px) scaleX(0.9967);-webkit-text-stroke:0.2px;">100%</div>
</div>

<svg style="left:0;top:0" width="720" height="547" viewBox="0 0 720 547" fill="none">
<!-- outside the window: left sliver, right sliver (other window behind) -->
<rect x="0" y="0" width="1" height="547" fill="#050505"/>
<rect x="717.6" y="0" width="2.4" height="169" fill="#19181a"/>
<rect x="717.5" y="168.6" width="2.5" height="379" fill="#e9e9e9"/>
<rect x="718.6" y="168.6" width="1.4" height="379" fill="#ffffff"/>
<rect x="718" y="130" width="2" height="18" fill="#cfcfcf" opacity="0.0"/>
<!-- rounded bottom corners -->
<path d="M0 538 V547 H9 A8 8 0 0 1 1 539.5 V538 Z" fill="#030303"/>
<path d="M720 537 V547 H711 A8 8 0 0 0 717.6 539.5 V537 Z" fill="#ededed"/>
<!-- window border -->
<path d="M1.55 0 V540 A7.2 7.2 0 0 0 8.8 547.3" stroke="#707074" stroke-width="1.2"/>
<path d="M717.2 0 V168.5" stroke="#7a7a7a" stroke-width="1.1"/>
</svg>
</div>
</body>
</html>
